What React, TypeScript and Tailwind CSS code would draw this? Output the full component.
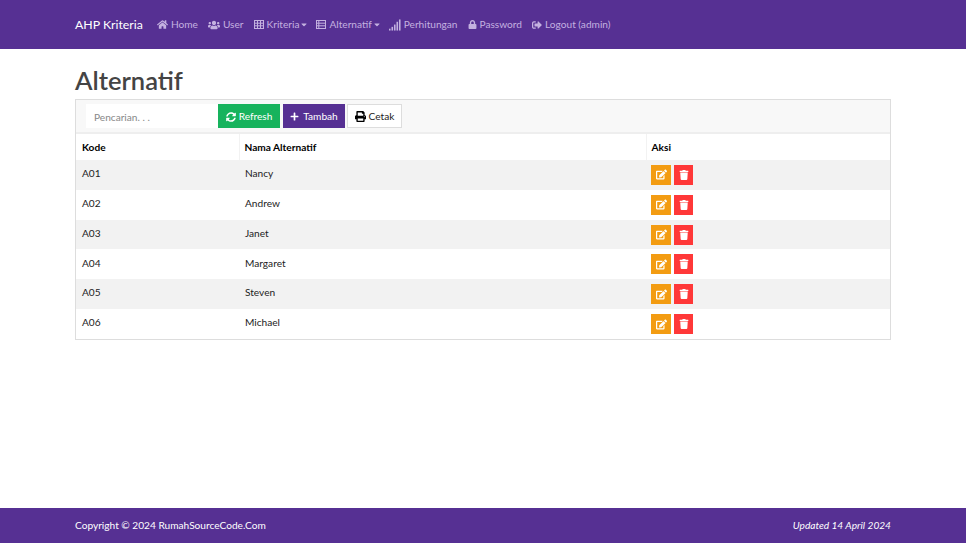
import { FaHome, FaUsers, FaLock, FaSignOutAlt, FaSyncAlt, FaPlus, FaPrint, FaEdit, FaTrash, FaCaretDown } from 'react-icons/fa'

const alternatif = [
  { kode: 'A01', nama: 'Nancy' },
  { kode: 'A02', nama: 'Andrew' },
  { kode: 'A03', nama: 'Janet' },
  { kode: 'A04', nama: 'Margaret' },
  { kode: 'A05', nama: 'Steven' },
  { kode: 'A06', nama: 'Michael' },
]

function SignalIcon() {
  return (
    <svg width="12" height="12" viewBox="0 0 13 12" fill="currentColor">
      <rect x="0" y="10" width="1.7" height="2" />
      <rect x="2.7" y="8" width="1.7" height="4" />
      <rect x="5.4" y="5.5" width="1.7" height="6.5" />
      <rect x="8.1" y="2.5" width="1.7" height="9.5" />
      <rect x="10.8" y="0" width="1.7" height="12" />
    </svg>
  )
}

function GridIcon() {
  return (
    <svg width="10" height="9" viewBox="0 0 10 9" fill="none" stroke="currentColor" strokeWidth="1">
      <rect x="0.5" y="0.5" width="9" height="8" />
      <path d="M3.5 0.5v8M6.5 0.5v8M0.5 3.2h9M0.5 5.8h9" />
    </svg>
  )
}

function ListIcon() {
  return (
    <svg width="10" height="9" viewBox="0 0 10 9" fill="none" stroke="currentColor" strokeWidth="1">
      <rect x="0.5" y="0.5" width="9" height="8" />
      <path d="M2.8 0.5v8M0.5 3.2h9M0.5 5.8h9" />
    </svg>
  )
}

function NavItem({ icon, label, caret }: { icon: React.ReactNode; label: string; caret?: boolean }) {
  return (
    <a className="flex items-center gap-[3px] text-[#c4b1e0] text-[10.15px] whitespace-nowrap">
      {icon}
      <span>{label}</span>
      {caret && <FaCaretDown className="w-[6px] h-[9px] -ml-[1px] -mr-[1px]" />}
    </a>
  )
}

export default function App() {
  return (
    <div className="min-h-[543px] flex flex-col bg-white font-['Lato',sans-serif] text-[10.15px] text-[#222]">
      <nav className="h-[49px] bg-[#563093] flex items-center px-[75px] pt-[1px]">
        <span className="text-white text-[12.3px] mr-[14px]">AHP Kriteria</span>
        <div className="flex items-center gap-[10px]">
          <NavItem icon={<FaHome size={11} />} label="Home" />
          <NavItem icon={<FaUsers size={12} />} label="User" />
          <NavItem icon={<GridIcon />} label="Kriteria" caret />
          <NavItem icon={<ListIcon />} label="Alternatif" caret />
          <NavItem icon={<SignalIcon />} label="Perhitungan" />
          <NavItem icon={<FaLock size={9} />} label="Password" />
          <NavItem icon={<FaSignOutAlt size={10} />} label="Logout (admin)" />
        </div>
      </nav>

      <main className="flex-1 px-[75px]">
        <h1 className="text-[25.5px] leading-[30px] font-semibold text-[#444] mt-[16px] mb-[4px]">Alternatif</h1>
        <div className="w-[816px] border border-[#ddd]">
          <div className="h-[34px] bg-[#f8f8f8] border-b-2 border-[#eee] flex items-center pl-[10px]">
            <input
              placeholder="Pencarian. . ."
              className="w-[132px] h-[24px] bg-white px-[8px] pt-[1px] text-[10.15px] outline-none placeholder:text-[#888]"
            />
            <button className="h-[24px] w-[62px] pt-[1px] bg-[#17b35d] text-white flex items-center justify-center gap-[3px]">
              <FaSyncAlt size={10} /> Refresh
            </button>
            <button className="h-[24px] w-[62px] pt-[1px] ml-[3px] bg-[#563093] text-white flex items-center justify-center gap-[4px]">
              <FaPlus size={9} /> Tambah
            </button>
            <button className="h-[24px] w-[55px] pt-[1px] ml-[2px] bg-white border border-[#ddd] text-[#222] flex items-center justify-center gap-[3px]">
              <FaPrint size={11} className="text-black" /> Cetak
            </button>
          </div>
          <table className="w-full border-collapse">
            <thead>
              <tr className="h-[26px] text-left text-black">
                <th className="w-[163px] pl-[6px] pt-[1px] font-bold">Kode</th>
                <th className="w-[407px] pl-[5px] pt-[1px] font-bold border-l border-[#f2f2f2]">Nama Alternatif</th>
                <th className="pl-[5px] pt-[1px] font-bold border-l border-[#f2f2f2]">Aksi</th>
              </tr>
            </thead>
            <tbody>
              {alternatif.map((row, i) => (
                <tr key={row.kode} className={i % 2 === 0 ? 'h-[29.84px] bg-[#f2f2f2]' : 'h-[29.84px] bg-white'}>
                  <td className="pl-[6px] pb-[2.4px]">{row.kode}</td>
                  <td className="pl-[6px] pb-[2.4px]">{row.nama}</td>
                  <td className="pl-[5px]">
                    <div className="flex gap-[3px]">
                      <button className="w-[20px] h-[20px] bg-[#f39c12] text-white flex items-center justify-center">
                        <FaEdit size={11} />
                      </button>
                      <button className="w-[19px] h-[20px] bg-[#ff3838] text-white flex items-center justify-center">
                        <FaTrash size={10} />
                      </button>
                    </div>
                  </td>
                </tr>
              ))}
            </tbody>
          </table>
        </div>
      </main>

      <footer className="h-[35px] pt-[1px] bg-[#563093] flex items-center justify-between px-[75px] text-white">
        <span>Copyright © 2024 RumahSourceCode.Com</span>
        <em>Updated 14 April 2024</em>
      </footer>
    </div>
  )
}
